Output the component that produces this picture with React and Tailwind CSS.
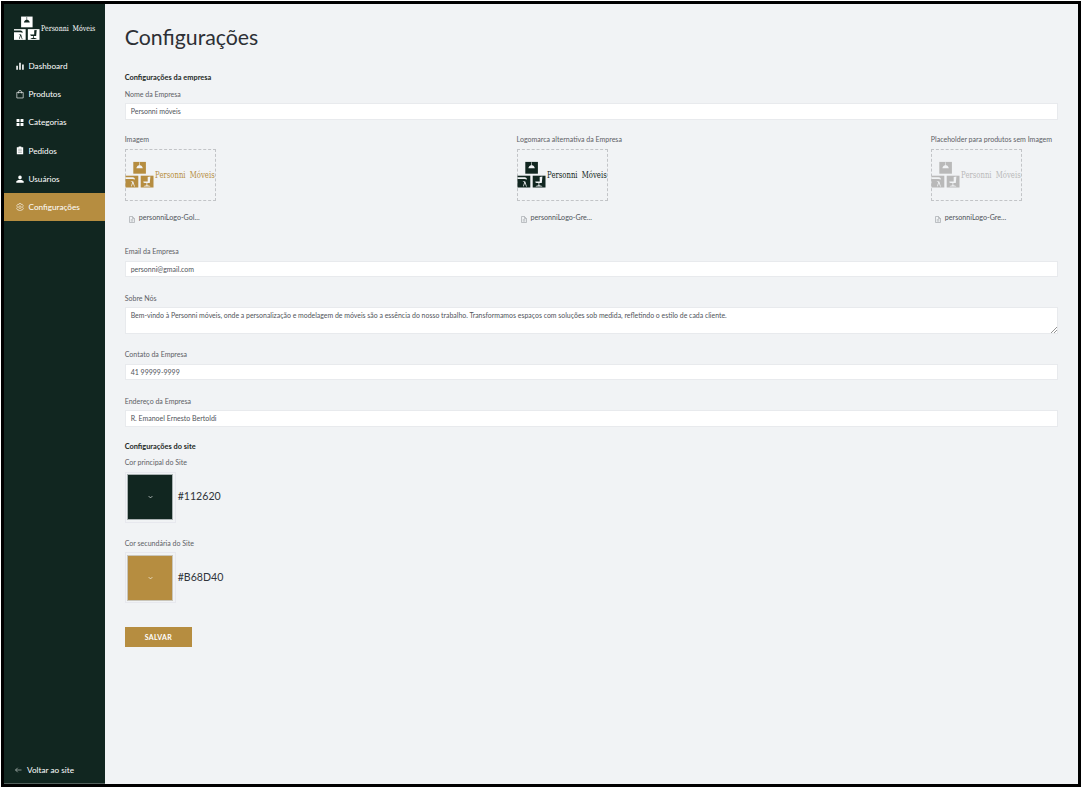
import React from "react";

function Logo({ color, ground, className }) {
  return (
    <svg viewBox="0 0 90 28" className={className} fill={color}>
      <rect x="7.8" y="0.9" width="12.6" height="11.8" />
      <path d="M13.8 1.300h.6v3c1.700.3 2.700 1.400 2.900 3h-6.400c.2-1.600 1.200-2.700 2.900-3z" fill={ground} />
      <rect x="0" y="14.7" width="12.8" height="11.8" />
      <path d="M0 16.300h7.200c1.500.2 2.300 1 2.400 2.300L7 18.100H0zM5 19.900l2.800.6 1.600 5.200-.8-.2-1.200-3.500-1.200 3.400-.6-.1 1.100-4.100z" fill={ground} />
      <rect x="15.2" y="14.7" width="12.8" height="11.8" />
      <path d="M22.200 15.900l2.700-.3-.6 6.500h-5.300l-1.300-.9.200-.7h4.300zM21 22.100h.8v2.100l2.900.8v.6h-6.400v-.6l2.700-.8z" fill={ground} />
      <text x="29.600" y="17.300" fontSize="8.600" wordSpacing="2.500" textLength="59.600" lengthAdjust="spacingAndGlyphs" fontFamily="'DejaVu Serif', 'Liberation Serif', serif">
        Personni Móveis
      </text>
    </svg>
  );
}

const icons = {
  dashboard: <path d="M0.500 7h3v7.500h-3zM6 1.500h3v13H6zM11.500 4.500h3v10h-3z" fill="currentColor" />,
  products: <path d="M1.500 4.500h12v10.500h-12zM5 6.500V2.500L6 1h3l1 1.500v4" fill="none" stroke="currentColor" strokeWidth="1.200" />,
  categories: <path d="M1 2h5.500v5.500H1zM8.500 2H14v5.500H8.500zM1 9.500h5.500V15H1zM8.500 9.500H14V15H8.500z" fill="currentColor" />,
  orders: (
    <>
      <path d="M1.500 2.500H5V1h5v1.500h3.500v13h-12z" fill="currentColor" />
      <path d="M4 6h7M4 9h7M4 12h7" stroke="#112620" strokeWidth="0.600" />
    </>
  ),
  users: <path d="M7.500 1a3.300 3.300 0 0 1 3.300 3.500c0 2-1.400 3.500-3.300 3.500S4.200 6.500 4.200 4.500A3.300 3.300 0 0 1 7.500 1zM0.500 14.500v-2.300c0-1.900 3.300-3 7-3s7 1.100 7 3v2.300z" fill="currentColor" />,
  settings: (
    <g fill="none" stroke="currentColor" strokeWidth="1.100">
      <path d="M5.800 1h3.400l.6 1.900 2-.4 2 2.900L12.600 7v1.800l1.200 1.500-2 2.900-2-.4-.6 2H5.800l-.6-2-2 .4-2-2.900 1.200-1.500V7L1.200 5.400l2-2.900 2 .4z" />
      <circle cx="7.500" cy="7.900" r="2.400" />
    </g>
  ),
};

const items = [
  ["dashboard", "Dashboard"],
  ["products", "Produtos"],
  ["categories", "Categorias"],
  ["orders", "Pedidos"],
  ["users", "Usuários"],
  ["settings", "Configurações"],
];

function Sidebar() {
  return (
    <aside className="flex w-[101px] shrink-0 flex-col border-b border-[#52605c] bg-[#112620] text-[8.2px] text-white">
      <Logo color="#ffffff" ground="#112620" className="mt-[11px] ml-[10px] h-[27px] w-[82px] overflow-visible" />
      <nav className="mt-[10px] flex flex-col">
        {items.map(([icon, label]) => (
          <a
            key={icon}
            className={
              icon === "settings"
                ? "flex h-[28.200px] items-center bg-[#b68d40] pl-3"
                : "flex h-[28.200px] items-center pl-3"
            }
          >
            <svg viewBox="0 0 15 16" className="mr-[4.500px] h-[8.500px] w-2">{icons[icon]}</svg>
            {label}
          </a>
        ))}
      </nav>
      <a className="mt-auto mb-[7px] flex h-3 items-center pl-[11px]">
        <svg viewBox="0 0 14 12" className="mr-[5px] h-[6px] w-[7px]" fill="none" stroke="#b5bfbb" strokeWidth="1.400">
          <path d="M13 6H1M5.500 1.500L1 6l4.500 4.500" />
        </svg>
        Voltar ao site
      </a>
    </aside>
  );
}

function Label({ children }) {
  return <div className="h-[10px] whitespace-nowrap text-[7.040px] leading-[10px] text-[#5d6065]">{children}</div>;
}

function Field({ label, value, className }) {
  return (
    <div className={className}>
      <Label>{label}</Label>
      <div className="mt-[4.500px] flex h-[16.500px] items-center border border-[#e8eaed] bg-white pl-[5px] text-[7px] text-[#50545a]">{value}</div>
    </div>
  );
}

function Upload({ label, file, color, className }) {
  return (
    <div className={className}>
      <Label>{label}</Label>
      <div className="mt-[4.500px] flex h-[52px] w-[91px] items-center border border-dashed border-[#c2c4c7]">
        <Logo color={color} ground="#f1f3f5" className="-ml-px h-[28px] w-[91px] shrink-0 overflow-visible" />
      </div>
      <div className="mt-[13px] flex h-[10.500px] items-center pl-1 text-[7.150px] whitespace-nowrap text-[#50545a]">
        <svg viewBox="0 0 12 14" className="mt-px mr-[4px] h-[7px] w-[6px]" fill="none" stroke="#a9adb2" strokeWidth="1.500">
          <path d="M1 1h6l4 4v8H1zM7 1v4h4M3.500 7.500h5M3.500 10h5" />
        </svg>
        {file}
      </div>
    </div>
  );
}

function Swatch({ label, value, fill, className }) {
  return (
    <div className={className}>
      <Label>{label}</Label>
      <div className="mt-[4.500px] flex items-center text-[10.600px] text-[#30343a]">
        <div className="mr-[2px] flex h-[51px] w-[51px] items-center justify-center border border-[#e7e8ee]">
          <div className={fill}>
            <svg viewBox="0 0 8 6" className="h-[4px] w-[5px]" fill="none" stroke="#ffffff" strokeWidth="1">
              <path d="M1 1.500l3 3 3-3" />
            </svg>
          </div>
        </div>
        {value}
      </div>
    </div>
  );
}

export default function App() {
  return (
    <div className="h-[788px] w-[1082px] overflow-hidden bg-white p-px font-['Lato',sans-serif]">
      <div className="flex h-[786px] w-[1080px] border-[3px] border-black">
        <Sidebar />
        <main className="flex min-w-0 flex-1 flex-col bg-[#f1f3f5] pr-[20px] pl-[19.700px]">
          <h1 className="mt-[19px] h-7 text-[21.300px] leading-7 text-[#2d3035]">Configurações</h1>
          <h2 className="mt-[22px] h-[10px] text-[7.400px] leading-[10px] font-bold text-[#1d2926]">Configurações da empresa</h2>
          <Field className="mt-[5.500px]" label="Nome da Empresa" value="Personni móveis" />
          <div className="mt-[14.500px] flex justify-between pr-[6px]">
            <Upload className="w-[83px]" label="Imagem" file="personniLogo-Gol..." color="#b68d40" />
            <Upload label="Logomarca alternativa da Empresa" file="personniLogo-Gre..." color="#112620" />
            <Upload label="Placeholder para produtos sem Imagem" file="personniLogo-Gre..." color="#b9b9b9" />
          </div>
          <Field className="mt-[22px]" label="Email da Empresa" value="personni@gmail.com" />
          <div className="mt-[15.500px]">
            <Label>Sobre Nós</Label>
            <div className="mt-[4.500px] flex h-[27px] items-start justify-between border border-[#e8eaed] bg-white pt-[1.500px] pl-[5px] text-[6.930px] leading-[11px] text-[#50545a]">
              <span>
                Bem-vindo à Personni móveis, onde a personalização e modelagem de móveis são a essência do nosso trabalho. Transformamos espaços com soluções sob medida, refletindo o estilo de cada cliente.
              </span>
              <svg viewBox="0 0 6 6" className="h-[6px] w-[6px] self-end" stroke="#777777" strokeWidth="0.800">
                <path d="M0 6l6-6M3 6l3-3" />
              </svg>
            </div>
          </div>
          <Field className="mt-[15px]" label="Contato da Empresa" value="41 99999-9999" />
          <Field className="mt-[15.500px]" label="Endereço da Empresa" value="R. Emanoel Ernesto Bertoldi" />
          <h2 className="mt-[15px] h-[10px] text-[7.400px] leading-[10px] font-bold text-[#1d2926]">Configurações do site</h2>
          <Swatch
            className="mt-[5.500px]"
            label="Cor principal do Site"
            value="#112620"
            fill="flex h-[46px] w-[46px] items-center justify-center border border-[#a9b1b2] bg-[#112620]"
          />
          <Swatch
            className="mt-[15px]"
            label="Cor secundária do Site"
            value="#B68D40"
            fill="flex h-[46px] w-[46px] items-center justify-center border border-[#c9c5ba] bg-[#b68d40]"
          />
          <button className="mt-6 h-5 w-[67.500px] bg-[#b68d40] text-[7px] font-bold tracking-[0.3px] text-white">SALVAR</button>
        </main>
      </div>
    </div>
  );
}
